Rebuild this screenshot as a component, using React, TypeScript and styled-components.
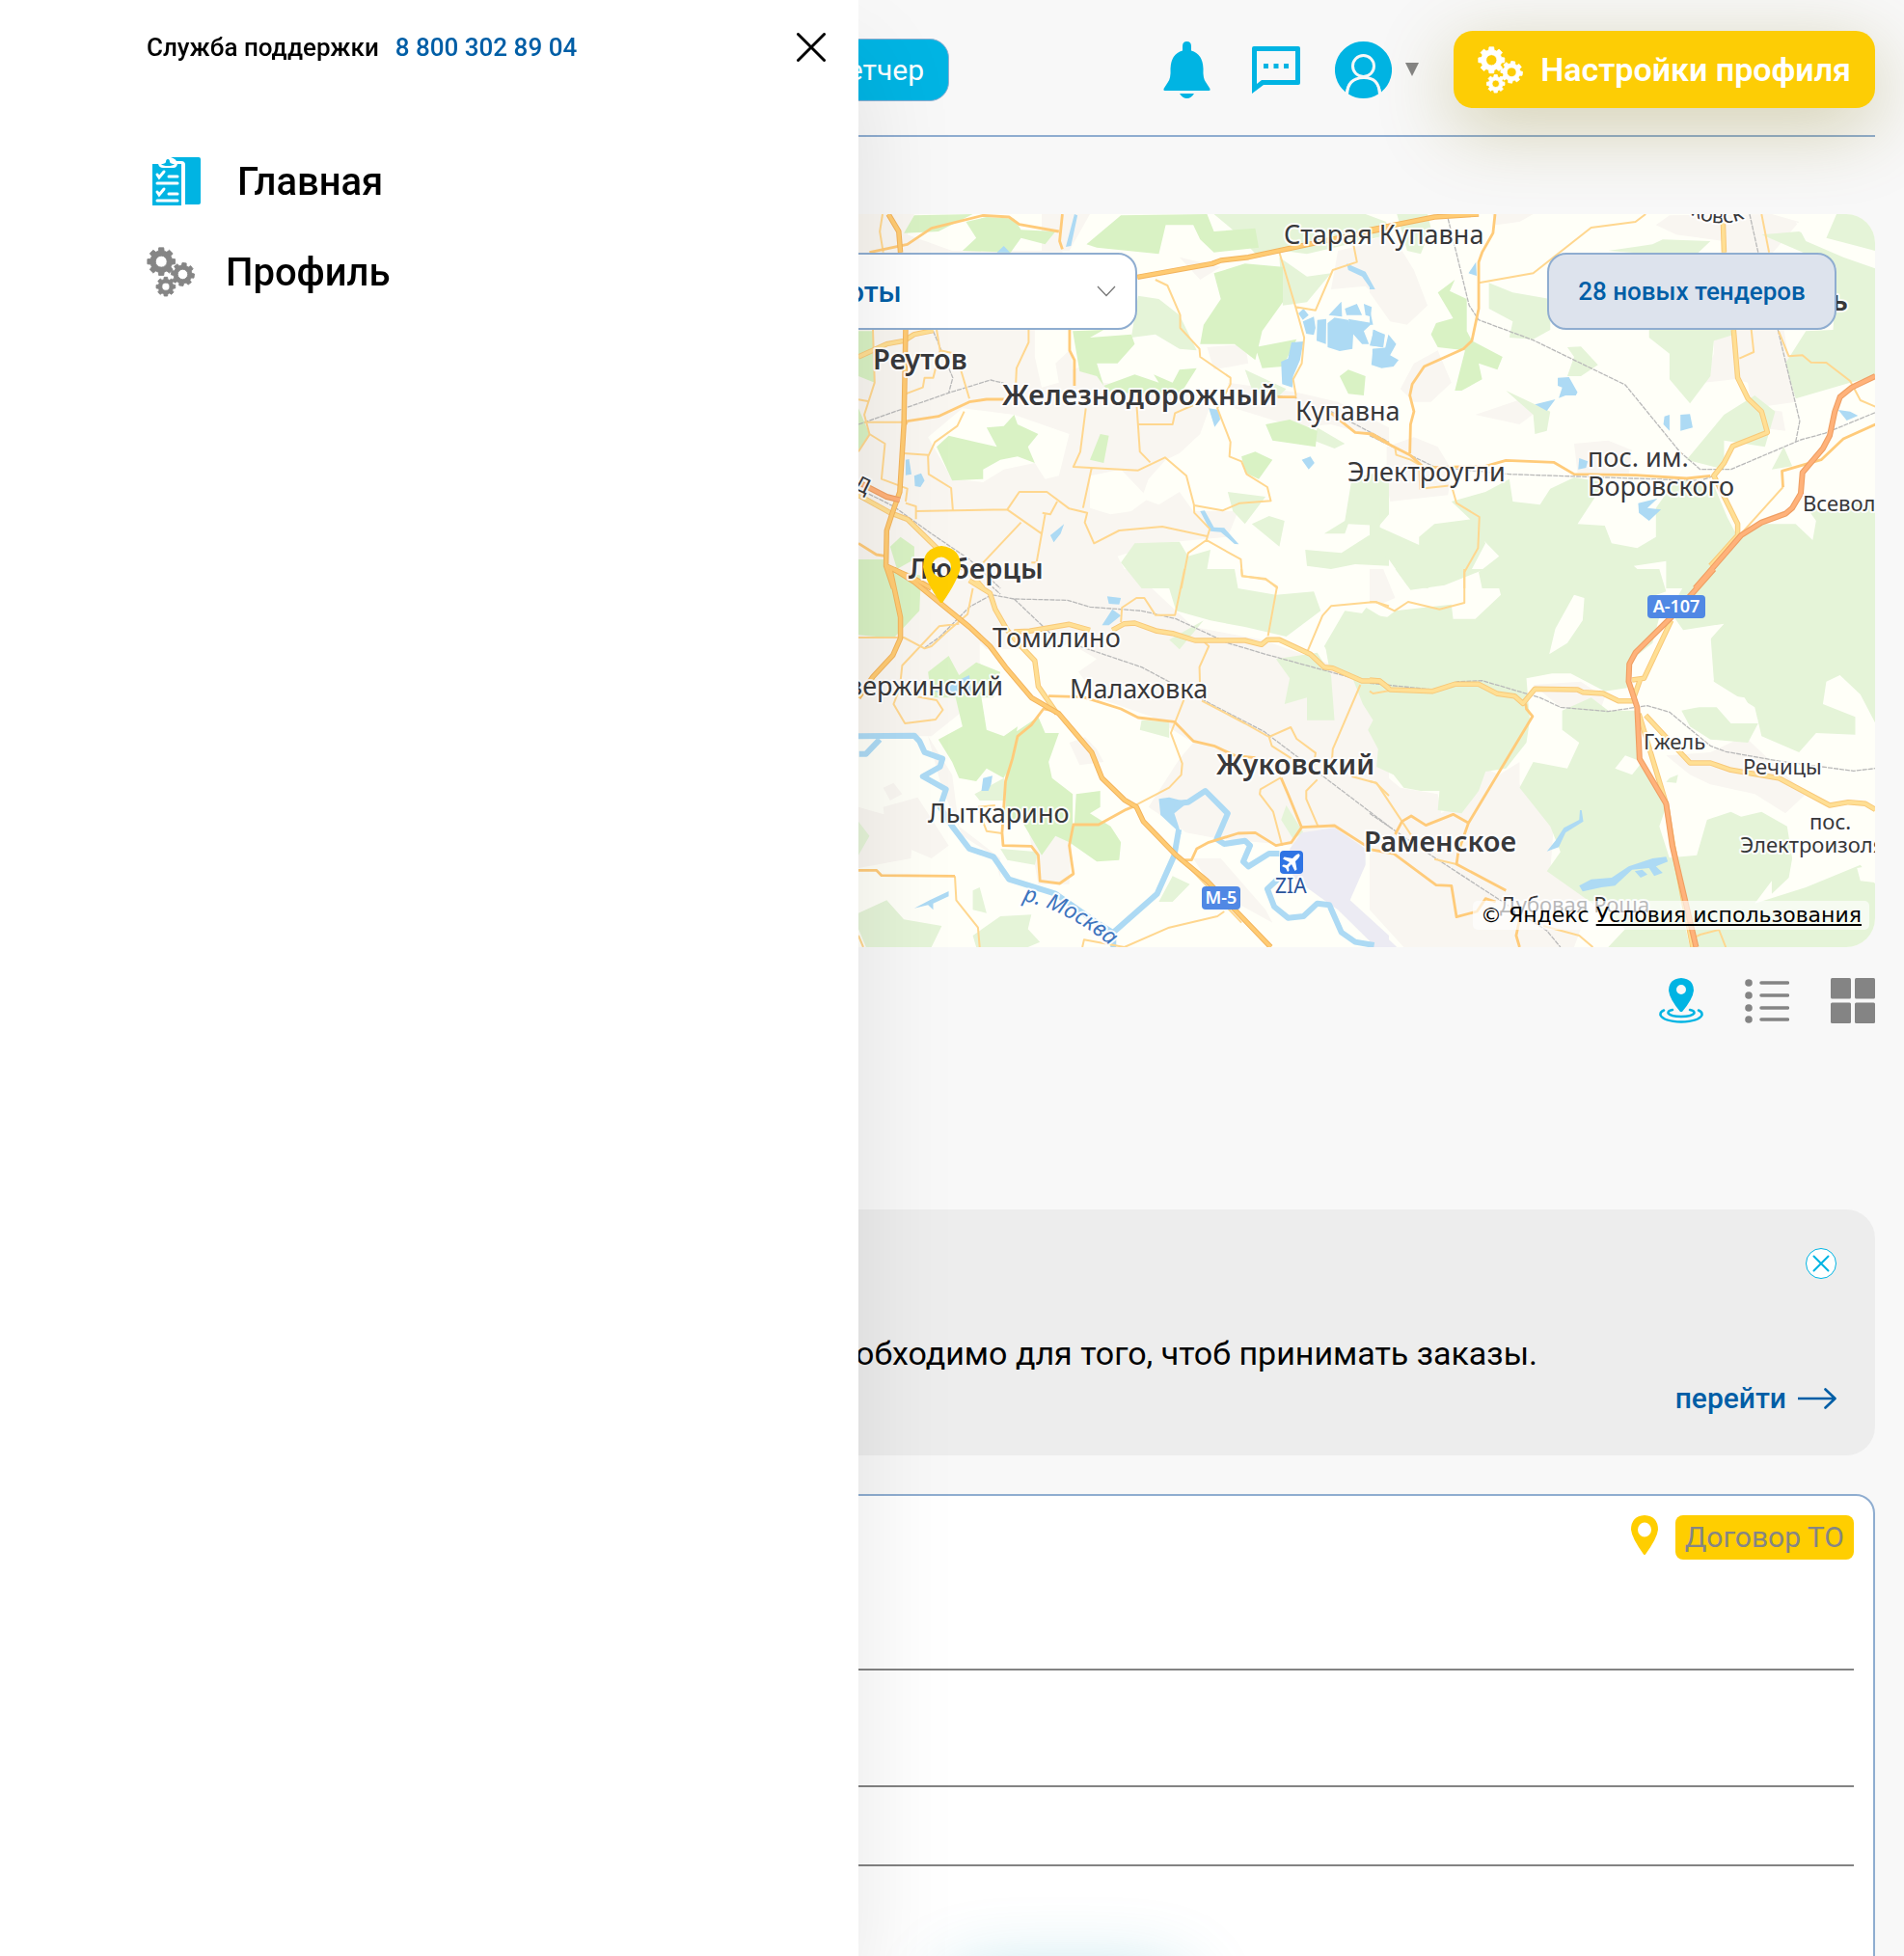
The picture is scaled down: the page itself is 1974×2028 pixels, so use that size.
import React from "react";
import styled, { createGlobalStyle, css } from "styled-components";

const GlobalStyle = createGlobalStyle`
  *, *::before, *::after { box-sizing: border-box; }
  body {
    margin: 0;
    background: #f8f8f8;
    color: #000;
    font-family: Roboto, "Noto Sans", sans-serif;
  }
  button, select { font: inherit; color: inherit; }
  button { padding: 0; border: 0; background: none; cursor: pointer; }
  a { color: inherit; text-decoration: none; }
  svg { display: block; flex: none; }
`;

/* ---------- icons ---------- */

function gear(cx: number, cy: number, outer: number, hole: number, turn = 0) {
  const inner = outer * 0.78;
  const point = (r: number, deg: number) => {
    const a = ((deg + turn) * Math.PI) / 180;
    return `${(cx + r * Math.cos(a)).toFixed(2)},${(cy + r * Math.sin(a)).toFixed(2)}`;
  };
  const points: string[] = [];
  for (let i = 0; i < 8; i++) {
    const a = i * 45;
    points.push(point(inner, a - 15), point(outer, a - 10), point(outer, a + 10), point(inner, a + 15));
  }
  return (
    `M${points.join("L")}Z` +
    `M${cx - hole},${cy}a${hole},${hole} 0 1 0 ${hole * 2},0a${hole},${hole} 0 1 0 ${-hole * 2},0Z`
  );
}

const GearsIcon = ({ width, height }: { width: number; height: number }) => (
  <svg width={width} height={height} viewBox="0 0 47 49" preserveAspectRatio="none" aria-hidden="true">
    <path
      fill="currentColor"
      stroke="currentColor"
      strokeWidth="0.8"
      strokeLinejoin="round"
      fillRule="evenodd"
      d={gear(14.3, 14.3, 13.7, 5.6) + gear(35.2, 26.8, 11.4, 4.9, 8) + gear(18.7, 38.8, 9.4, 3.8)}
    />
  </svg>
);

const ClipboardIcon = () => (
  <svg width="50" height="50" viewBox="0 0 50 50" aria-hidden="true">
    <path fill="#00b4e3" d="M19 0H48q2 0 2 2V47q0 2-2 2H34V8q0-4-4-4H25q-2-3-6-4Z" />
    <path fill="#00b4e3" d="M0 7H6Q7 11 11 11H22Q25 11 26 7H30V50H0Z" />
    <path fill="#00b4e3" d="M9 7q4 0 5-2 0-3 2-3t2 3q1 2 5 2-2 2-7 2T9 7Z" />
    <g stroke="#fff" strokeLinecap="round" strokeWidth="3" fill="none">
      <path d="M17 20h9M5 27h21M17 38h9M5 45h21" />
      <path d="M5 18l2 3 5-6M5 36l2 3 5-6" />
    </g>
  </svg>
);

const CrossIcon = ({ size, width }: { size: number; width: number }) => (
  <svg width={size} height={size} viewBox={`0 0 ${size} ${size}`} aria-hidden="true">
    <path
      d={`M1.5 1.5L${size - 1.5} ${size - 1.5}M${size - 1.5} 1.5L1.5 ${size - 1.5}`}
      stroke="currentColor"
      strokeWidth={width}
      strokeLinecap="round"
    />
  </svg>
);

const BellIcon = () => (
  <svg width="56" height="59" viewBox="0 0 56 59" aria-hidden="true">
    <path
      fill="currentColor"
      d="M24.500 0Q29 0 29 5V9.500Q41 13 41.500 28 41 38 44 42L48.500 49Q49 51 47.500 51H1.500Q0 51 .5 49L5 42Q8 38 7.500 28 8 13 20 9.500V5Q20 0 24.500 0Z"
    />
    <path fill="currentColor" d="M17 54H32Q29 59 24.500 59T17 54Z" />
  </svg>
);

const ChatIcon = () => (
  <svg width="50" height="49" viewBox="0 0 50 49" aria-hidden="true">
    <path
      fill="currentColor"
      fillRule="evenodd"
      d="M2 0H48q2 0 2 2V38q0 2-2 2H12L0 49V2Q0 0 2 0ZM5 5V39L10 35H45V5Z"
    />
    <path fill="currentColor" d="M12 18h5v5h-5zM22.500 18h5v5h-5zM33 18h5v5h-5z" />
  </svg>
);

const UserIcon = () => (
  <svg width="59" height="59" viewBox="0 0 59 59" aria-hidden="true">
    <path
      fill="currentColor"
      d="M29.500 0A29.500 29.500 0 0 1 48 52.500Q46 38 29.500 38T11 52.500A29.500 29.500 0 0 1 29.500 0Z"
    />
    <path fill="currentColor" d="M14 54.500Q14 38 29.500 38T45 54.500Q38 59 29.500 59T14 54.500Z" />
    <path d="M12.500 55Q13 38 29.500 37.500T46.500 55" fill="none" stroke="#f8f8f8" strokeWidth="3" />
    <circle cx="29.500" cy="25.500" r="11" fill="none" stroke="#f8f8f8" strokeWidth="3" />
  </svg>
);

const PinIcon = ({ width, height }: { width: number; height: number }) => (
  <svg width={width} height={height} viewBox="0 0 28 41" preserveAspectRatio="none" aria-hidden="true">
    <path
      fill="#ffce00"
      fillRule="evenodd"
      d="M14 0Q28 1 28 15 27 24 15 40.500 14 41.500 13 40.500 1 24 0 15 0 1 14 0ZM7 15a7 7.500 0 1 0 14 0a7 7.500 0 1 0 -14 0Z"
    />
  </svg>
);

const MapViewIcon = () => (
  <svg width="46" height="47" viewBox="0 0 46 47" aria-hidden="true">
    <path
      fill="currentColor"
      fillRule="evenodd"
      d="M23 0Q36 1 36 13 35 22 24 35H22Q11 22 10 13 10 1 23 0ZM18 12a5 5 0 1 0 10 0a5 5 0 1 0 -10 0Z"
    />
    <g fill="none" stroke="currentColor" strokeWidth="2.500" strokeLinecap="round">
      <path d="M14 33Q9 34 9.500 36.500 12 40 23 40T36.500 36.500Q37 34 32 33" />
      <path d="M5 33.500Q1 35 1.500 38.500 5 45 23 45.500 41 45 44.500 38.500 45 35 41 33.500" />
    </g>
  </svg>
);

const ListViewIcon = () => (
  <svg width="46" height="47" viewBox="0 0 46 47" aria-hidden="true">
    {[5, 18, 31, 43].map((y) => (
      <g key={y}>
        <circle cx="4" cy={y} r="3.800" fill="currentColor" />
        <path d={`M17 ${y}H44.500`} stroke="currentColor" strokeWidth="3.500" strokeLinecap="round" />
      </g>
    ))}
  </svg>
);

const GridViewIcon = () => (
  <svg width="46" height="47" viewBox="0 0 46 47" fill="currentColor" aria-hidden="true">
    <rect width="21" height="21.500" rx="1.500" />
    <rect x="25" width="21" height="21.500" rx="1.500" />
    <rect y="25.500" width="21" height="21.500" rx="1.500" />
    <rect x="25" y="25.500" width="21" height="21.500" rx="1.500" />
  </svg>
);

const ArrowIcon = () => (
  <svg width="40" height="22" viewBox="0 0 40 22" aria-hidden="true">
    <path
      d="M0 11H38M28.500 1.500L38.500 11L28.500 20.500"
      fill="none"
      stroke="currentColor"
      strokeWidth="2.600"
      strokeLinecap="round"
      strokeLinejoin="round"
    />
  </svg>
);

const ChevronIcon = () => (
  <svg width="20" height="12" viewBox="0 0 20 12" aria-hidden="true">
    <path d="M1 1L10 10.500L19 1" fill="none" stroke="#777" strokeWidth="1.300" />
  </svg>
);

/* ---------- map ---------- */

type Layer =
  | "urban" | "clearing" | "wood" | "glade" | "park" | "field" | "water" | "river"
  | "rail" | "minor" | "mid" | "thick" | "highway" | "trunk";

const layerOrder: Layer[] = [
  "urban", "clearing", "wood", "glade", "park", "field", "water", "river",
  "rail", "minor", "mid", "thick", "highway", "trunk",
];

const fills: Partial<Record<Layer, string>> = {
  urban: "#f9f6f1",
  clearing: "#fffff8",
  wood: "#e5f4d8",
  glade: "#fffff8",
  park: "#d9f2c4",
  field: "#ecebf3",
  water: "#addaf4",
};

const strokes: Partial<Record<Layer, Array<[string, number]>>> = {
  river: [["#addaf4", 6]],
  rail: [["#b9b9b9", 1.3]],
  minor: [["#ffd78f", 2]],
  mid: [["#ffcb7a", 2.8]],
  thick: [["#f8c878", 5.5], ["#ffdf94", 3.6]],
  highway: [["#f2b35c", 5.5], ["#ffcb73", 3.6]],
  trunk: [["#ef9f63", 6], ["#ffb27a", 3.8]],
};

interface Sheet {
  origin: string;
  layers: Partial<Record<Layer, string>>;
}

const sheets: Sheet[] = [
  {
    origin: "translate(880 210) scale(0.35714 0.33333)",
    layers: {
      urban:
        "M28,36L190,36 170,100 300,150 620,150 640,400 650,520 700,500 740,560 1060,600 1020,720 960,780 920,800 870,860 850,920 900,940 960,900 1000,960 1130,960 1100,1040 900,1060 780,1100 830,1200 28,1200Z" +
        "M560,36L700,36 640,150 560,150ZM960,170L1080,200 1020,240Z" +
        "M1040,450L1150,440 1160,500 1060,520ZM1420,150L1500,130 1568,160 1568,330 1500,260 1400,270ZM1100,560L1300,590 1420,620 1568,700 1568,740 1400,690 1300,700 1120,640Z",
      clearing:
        "M540,396L640,396 640,460 600,500 610,560 560,575 540,480ZM230,730L330,640 480,660 640,720 610,850 570,860 540,810 450,830 390,870 300,860ZM700,850L790,830 870,920 820,960 760,970 700,950Z",
      wood:
        "M1060,36L1500,36 1560,60 1568,100 1330,160 1260,150 1190,170 1120,90ZM840,290L900,300 960,350 1010,460 960,455 890,410 820,420Z" +
        "M1250,170L1330,230 1400,220 1330,310 1260,320ZM1150,520L1270,580 1230,620 1170,580ZM1100,900L1210,915 1150,1000 1115,960Z" +
        "M1170,1000L1220,975 1265,990 1250,1070ZM1460,860L1568,830 1568,970 1540,1005 1450,1000 1440,1030 1380,1030 1440,990ZM1325,1080L1430,1090 1510,1035 1568,1060 1568,1130 1470,1125 1400,1140 1330,1130Z" +
        "M790,1120L830,1060 960,1055 985,1100 1050,1080 1030,1200 850,1200ZM1360,700L1440,750 1410,765 1350,740Z",
      park:
        "M160,95L190,40 360,36 260,90ZM340,60L400,45 480,50 500,85 600,90 570,130 500,110 470,155 330,150 370,110Z" +
        "M690,130L790,40 1040,36 1060,90 1180,80 1190,140 1060,155 1020,115 1000,70 920,70 900,160 720,140Z" +
        "M1060,220L1150,190 1260,200 1260,310 1200,400 1180,490 1120,440 1020,440 1030,380 1080,300Z" +
        "M650,400L740,396 700,420 820,410 830,440 780,500 720,500 740,570 720,540 670,525Z" +
        "M740,570L830,535 900,560 885,535 940,560 960,520 1010,515 960,600 760,590Z" +
        "M400,700L450,695 480,660 490,690 550,720 520,760 540,810 490,790 440,800 390,830 390,860 300,865 255,760 290,725 430,760Z" +
        "M730,720L755,725 740,810 700,800ZM1140,790L1180,775 1230,800 1190,860 1150,840ZM1210,690L1280,675 1360,710 1355,760 1230,740Z" +
        "M1425,540L1450,520 1500,540 1495,600 1450,595ZM28,400L70,400 75,560 28,540ZM28,640L60,720 28,770Z" +
        "M120,1070L150,1040 190,1070 190,1110 140,1140ZM28,1110L100,1110 130,1200 28,1200ZM1180,450L1300,425 1260,510 1200,515Z",
      water:
        "M655,36L664,40 645,135 630,138ZM430,155L450,135 468,155ZM1445,190L1500,215 1528,270 1515,268 1490,230 1450,210Z" +
        "M1305,345L1320,330 1335,350 1318,365ZM1318,370L1350,355 1355,390 1350,412 1328,408ZM1360,365L1386,362 1385,440 1358,430Z" +
        "M1390,375L1410,358 1450,365 1465,400 1462,455 1425,462 1390,450ZM1393,350L1430,308 1432,355ZM1440,330L1475,315 1490,350 1445,350Z" +
        "M1495,315L1518,325 1515,355 1500,350ZM1450,362L1520,375 1495,400 1510,440 1490,440 1465,410ZM1525,395L1555,415 1550,450 1512,445Z" +
        "M1520,455L1568,450 1568,510 1520,495ZM1285,435L1320,432 1310,490 1290,540 1288,575 1258,565 1255,495 1275,485Z" +
        "M1045,640L1075,645 1078,675 1062,698ZM1315,800L1340,790 1352,810 1335,830ZM165,800L175,798 182,845 165,848Z" +
        "M190,850L210,842 220,865 208,885 192,882ZM585,1035L605,1018 625,1000 615,1030 595,1057ZM1020,960L1033,958 1060,1010 1090,1012 1132,1063 1120,1062 1080,1025 1050,1022Z",
      rail:
        "M28,690L290,592 412,552 450,562M245,400L302,545 290,592M28,890L130,945 240,1030 350,1110 440,1200M1245,602L1300,608M1400,650L1568,745",
      minor:
        "M98,36L90,90 100,155M70,396L75,560 45,660 60,720 105,750 95,860 170,890 165,930M255,396L265,460 310,470M522,396L522,435 487,515 485,560" +
        "M325,520L350,610M165,595L215,575 220,545 245,545 265,460M45,683L160,683M28,775L60,722M28,613L55,618M335,650L315,695 250,745 230,790 232,845 297,888 302,955" +
        "M160,780L230,785M165,935L195,945 195,985M195,960L460,955 495,900 575,900 640,952 692,965 685,995 712,1060 785,1020 910,1008 1040,1038M460,955L560,1030" +
        "M605,930L585,970 562,965M570,970L545,1120 530,1120M500,995L390,1120M688,640L672,775 652,822 840,833 918,793 980,850 1002,940 1003,965 1048,1015 1038,1050 985,1090 965,1200" +
        "M705,825L680,950M836,635L845,775 875,808M838,690L940,690 947,655 1000,630M890,240L925,258 962,350 962,390 1018,455 1020,480 1108,545 1108,565 1070,640 1108,745 1105,790 1140,805 1155,845 1215,885 1225,928 1135,935 1085,958 1003,942" +
        "M1250,155L1297,325 1322,420 1315,500 1290,550 1298,600M1297,325L1355,335 1405,210 1475,185 1465,130M1038,1050L1138,1110 1142,1162 1210,1170 1245,1200",
      mid:
        "M60,155L170,130 240,80 390,40 465,45 495,68 610,90M620,36L612,120 620,145M165,690L170,680 260,665 350,620 400,612 450,612" +
        "M641,396L641,460 655,490 655,570M1245,605L1300,605M1400,655L1470,715 1520,720 1568,750M28,1060L80,1095 108,1100",
      thick: "M28,480L110,440 160,430 190,410 245,398M28,910L120,965 170,985 270,1090 350,1150 390,1200",
      highway:
        "M115,36L145,90 150,155M165,396L160,690 148,900 125,970 110,1020 108,1130 130,1200M108,1130L190,1170 240,1200M838,232L1055,190 1080,180 1160,170 1400,115 1568,78",
      trunk: "M28,870L110,915 148,925",
    },
  },
  {
    origin: "translate(1420 210) scale(0.35332 0.33333)",
    layers: {
      urban:
        "M0,120L60,90 130,210 170,320 110,380 60,370 0,280ZM360,36L480,36 440,60 370,70Z" +
        "M840,70L880,40 1180,36 1260,60 1220,110 1180,160 1250,620 1120,640 1110,560 1070,550 980,560 1010,470 1010,420 1050,396 1040,120 900,100Z" +
        "M90,580L130,500 200,460 240,560 180,620 130,620ZM310,660L450,610 490,650 440,690Z" +
        "M50,760L130,730 200,760 240,830 230,910 60,930 50,870ZM600,750L700,740 770,770 760,850 610,840ZM1150,640L1210,650 1220,710 1140,700Z",
      wood:
        "M80,36L170,36 180,80 150,160 110,150ZM700,150L830,130 860,115 1000,120 950,170ZM350,250L420,280 530,300 530,396 480,425 410,420 420,370 350,330Z" +
        "M820,396L1070,396 1070,410 1010,430 1000,540 940,625 880,550 880,470 820,420ZM1150,100L1260,90 1484,200 1484,540 1410,560 1250,610 1220,500 1280,400 1360,396 1370,200Z" +
        "M1370,36L1484,36 1484,150 1340,110ZM580,450L620,448 670,505 620,540 580,540 600,480ZM400,585L530,650 520,710 485,720 480,660Z" +
        "M1040,660L1130,600 1190,650 1160,760 1040,740 1040,830 930,800ZM1215,760L1180,830 1240,820Z" +
        "M0,950L30,950 30,1010 145,1065 145,1040 190,1000 300,985 340,1060 300,1140 200,1180 170,1200 110,1190 50,1100 0,1125Z" +
        "M240,930L340,900 410,860 420,930 500,940 530,890 600,855 690,870 610,1000 690,1005 710,1060 785,1075 840,1040 840,950 900,860 1010,880 1050,980 1080,1040 1140,1000 1250,1000 1300,1050 1310,990 1290,960 1484,920 1484,1200 870,1200 870,1115 775,1130 850,1200 330,1200 320,1150 380,1100 325,1040 300,990Z",
      glade: "M1250,60L1330,110 1484,170 1484,205 1390,170 1280,120ZM1280,615L1400,620 1420,570 1484,560 1484,640 1280,640Z",
      park:
        "M200,280L250,240 235,275 285,300 285,400 300,430 390,480 375,520 320,500 330,550 270,585 250,585 280,460 200,450 180,410 195,375 245,360Z",
      water:
        "M0,245L15,270 0,270ZM290,220L312,185 314,228ZM0,330L10,380 0,380ZM10,395L45,410 40,450 5,445ZM55,410L78,440 60,475 85,490 70,510 35,515 5,505 10,455 45,455Z" +
        "M552,545L585,543 610,590 605,600 575,600 555,608 565,575 552,570ZM485,628L545,612 520,648ZM865,665L880,660 880,710 862,690ZM912,660L940,658 948,700 912,710Z" +
        "M1375,645L1410,650 1433,663 1400,678ZM615,795L640,805 635,825 612,830ZM788,935L845,920 815,950 855,955 820,990 790,965Z",
      rail:
        "M230,50L292,320 320,365 480,428 750,567 910,775 970,830 1060,830 1265,738 1335,718 1484,653M1115,36L1140,155M1198,396L1262,680 1250,745M0,725L190,822 410,845 970,865 1010,850",
      minor:
        "M320,250L480,220 650,78 780,60 810,36M1150,36L1172,155M1200,400L1230,478 1270,475 1295,497 1340,498 1410,555 1440,615 1484,635" +
        "M1120,396L1127,465 1085,485M75,765L78,785 120,800 145,815 148,890 240,880 255,935 322,978 318,1075 278,1150 278,1200M1213,885L1090,1030",
      mid:
        "M368,36L362,95 330,155 320,185 320,330 300,430 275,455 160,510 125,565 118,600 130,650 120,690 118,780M0,720L75,762 118,785 160,825 340,820 400,802 540,808 600,845 780,848 930,858 1000,850M1484,690L1390,735 1325,800 1210,835 1213,885",
      thick:
        "M1037,60L1040,155M1068,396L1080,545 1110,610 1150,650 1167,715 1065,758 1040,810 1010,850 1080,1000 1080,1035 1000,1130",
      highway: "M0,85L190,45 320,36",
      trunk: "M1484,540L1415,575 1380,605 1365,650 1350,725 1330,765 1270,840 1265,905 1240,950 1220,968 1150,995 1090,1035 955,1200",
    },
  },
  {
    origin: "translate(880 590) scale(0.35714 0.33333)",
    layers: {
      urban:
        "M28,0L860,0 880,60 1000,180 1200,220 1568,360 1568,860 1300,860 1080,840 980,820 870,740 960,590 1000,540 880,460 720,400 620,250 400,250 380,400 240,520 28,520Z" +
        "M640,540L720,510 790,520 740,600 670,610ZM230,520L300,640 320,800 440,900 440,960 420,890 330,830 270,680Z" +
        "M520,800L650,800 640,980 550,980ZM100,740L200,710 290,860 240,900 110,840ZM28,740L190,790 180,900 28,930ZM1000,900L1080,900 1210,1060 1230,1100 1060,1000ZM100,680L130,665 155,700 120,720Z",
      clearing: "M380,230L450,300 540,410 450,500 390,480 420,390 380,290ZM580,260L640,230 720,280 640,340 580,340ZM620,400L740,420 880,480 940,560 900,620 830,720 790,700 720,560 620,450Z",
      wood:
        "M855,0L1120,0 1130,60 1240,80 1350,70 1370,130 1270,210 1150,180 1050,160 950,130 930,60 860,60ZM930,220L1030,160 960,250ZM1380,240L1440,130 1568,150 1568,300 1410,290Z" +
        "M1240,280L1360,260 1400,330 1410,470 1330,470 1330,400 1265,420 1280,340ZM850,470L930,475 930,525 845,500Z" +
        "M365,700L450,650 455,720 380,720ZM440,870L550,880 540,920 460,905ZM28,1070L110,1030 160,1090 270,1110 240,1176 50,1176 28,1120Z" +
        "M360,1000L380,990 400,1070 360,1060ZM360,1140L440,1080 530,1075 520,1120 555,1160 520,1176 370,1176ZM900,1035L940,955 990,980 940,1035ZM28,785L60,830 28,890ZM1255,780L1270,735 1320,820 1290,840Z",
      park:
        "M28,0L120,0 210,20 205,130 130,215 28,205ZM230,320L290,270 320,330 370,290 440,320 420,400 385,400 400,500 450,520 490,490 470,600 450,650 400,620 370,660 320,650 300,600 260,530 330,490 310,400 240,400Z" +
        "M480,510L550,460 570,510 610,510 580,600 590,650 650,700 650,790 640,850 600,830 560,890 500,780 455,780 455,640Z" +
        "M660,700L730,690 730,740 700,760 760,800 790,850 785,905 720,910 640,850 655,790Z",
      field: "M1315,820L1410,805 1500,870 1500,920 1455,1030 1568,1140 1568,1176 1530,1176 1420,1060 1380,1030 1290,960 1280,870Z",
      water:
        "M900,715L930,710 985,725 945,760 965,825 905,765ZM750,85L790,90 785,110 755,108ZM735,175L765,125 790,145 755,175ZM390,650L417,643 413,670 405,690 385,690Z" +
        "M190,1055L235,1030 290,1002 290,1018 245,1040 245,1060 230,1045ZM250,380L300,355 350,330 355,390 260,385Z",
      river:
        "M28,520L190,518 205,535 220,570 272,590 265,615 215,645 282,685 265,740 300,800 350,870 420,895 465,965 600,1010 720,1100 768,1132 768,1176M768,1130L895,1010 945,890 958,810" +
        "M30,575L50,575 90,530M945,730L985,725 1035,690 1100,760 1068,840 1090,855 1150,845 1165,860 1145,910 1160,925 1220,885 1250,885M1250,960L1215,995 1235,1050 1275,1085 1320,1080 1360,1040 1395,1045 1430,1130 1470,1160 1525,1170",
      rail:
        "M220,245L265,210 350,118 415,80 480,93 635,97 700,118 850,130 950,155 1100,230 1210,265 1500,350 1568,362M400,40L440,78M480,93L585,200M670,240L850,305 1025,405 1205,505 1568,800",
      minor:
        "M28,213L160,213 220,247 240,240 280,200 345,140 360,60M320,170L262,178 155,300 148,370 130,420 163,480 252,468 273,438 255,408 190,395M308,955L312,1030 375,1115 380,1176" +
        "M835,733L930,680 965,640 968,605 935,510 975,400M1020,380L1018,305 1045,240 1030,225M790,165L793,120 835,90 858,90 890,143 947,143 975,0M1140,0L1142,22 1210,32 1243,55 1217,208" +
        "M1568,115L1528,102 1400,115 1375,145 1330,260M1485,360L1405,560 1403,590M1025,410L1150,480 1220,522 1283,492 1300,528 1355,572 1350,610M1220,522L1228,550 1330,620" +
        "M1255,648L1195,685 1193,700 1232,755 1258,860M1360,655L1328,690 1328,715 1362,800M1460,645L1530,665 1568,705M800,1176L930,1115 1070,1080 1090,1065M678,1176L683,1153 800,1176 M375,740L425,735M375,745L400,815 445,822M28,1140L42,1176M990,930L1140,1100",
      mid:
        "M580,395L680,398 790,435 840,462 945,475 1000,535 1060,550 1120,580 1180,587M445,820L448,860 530,862 550,890 555,970 612,978 652,948 640,860 652,795 725,795 805,748 835,735" +
        "M590,440L565,435 530,485 490,520 475,590 455,660 445,820M1315,805L1275,700 1255,650M975,905L995,905 1010,870 1045,850 1130,822 1180,820 1240,860 1285,850 1315,803 1410,798 1500,860M28,937L80,937 95,953 308,955",
      thick:
        "M350,35L410,75 425,125 460,190 500,240 540,285 550,365 605,450M480,195L525,193 640,172 700,190M765,190L800,170 830,168 895,193 940,200 1005,222 1150,222 1198,235 1215,220 1250,220 1340,265 1380,305 1405,308 1490,348 1540,348 1568,370",
      highway:
        "M120,0L150,150 150,215 128,268 70,335 28,400M130,0L190,40 350,180 410,240 455,305 530,400 610,450 705,570 735,650 800,718 835,740 855,785 950,890 1040,970 1225,1176",
    },
  },
  {
    origin: "translate(1420 590) scale(0.35332 0.33333)",
    layers: {
      urban:
        "M0,0L40,0 75,90 30,110 0,100ZM300,600L380,640 440,600 440,670 490,740 540,800 530,940 600,960 640,1030 640,1060 600,1176 100,1176 0,1060 0,600 90,680 200,700 210,760 320,690Z" +
        "M480,360L620,350 690,400 680,430 560,430ZM870,580L1000,570 1100,520 1140,560 1280,700 1220,760 1130,700 1000,670 940,640Z",
      wood:
        "M-10,120L45,155 75,130 240,110 245,155 310,155 385,80 375,40 340,0 850,0 870,70 830,85 850,150 830,230 760,290 755,370 690,380 590,325 535,325 460,340 470,470 460,540 400,620 340,630 320,690 270,760 200,750 205,690 150,690 100,680 70,640 20,615 25,560 -5,500 10,470 -20,420 -50,340 -120,300 -130,240 -60,190Z" +
        "M75,0L340,0 220,50 120,65ZM950,0L1484,0 1484,480 1440,390 1380,330 1340,350 1330,420 1425,460 1425,515 1310,510 1260,570 1150,520 1130,430 1010,350 990,230 1040,170 920,190 880,130Z" +
        "M915,440L1010,420 1060,480 1140,480 1110,540 1000,530 940,490ZM880,650L905,640 900,665 870,662Z" +
        "M565,440L650,400 700,440 780,440 790,600 870,740 850,800 880,900 940,1176 700,1176 750,1120 640,1030 520,940 560,880 530,800 440,680 480,600 580,620 615,540 565,500Z" +
        "M860,900L960,890 990,780 1060,755 1090,770 1150,755 1225,800 1240,900 1230,960 1180,1010 1180,970 1130,1040 1280,990 1440,920 1484,980 1484,1176 1000,1176 960,1176Z",
      glade:
        "M600,80L630,90 625,160 580,230 527,265 545,185ZM720,620L750,580 800,600 770,640ZM1010,345L980,380 1100,400 1140,470 1020,430 910,430 860,380 870,200 1000,200ZM1430,930L1484,920 1484,975 1440,970Z",
      field: "M0,1095L80,1176 0,1176Z",
      water:
        "M617,750L622,750 627,785 575,820 555,865 520,878 545,845 570,805 615,780ZM615,985L650,965 710,960 760,925 830,900 870,895 875,910 840,925 860,945 835,955 820,930 770,935 720,985 680,990 625,1003ZM778,940L800,935 815,950 795,960Z",
      rail:
        "M0,355L185,375 260,350 330,347 500,400 560,430 700,443 815,425 880,445 1000,550 1045,568 1200,597 1420,628 1484,620M0,760L180,890 390,1035 520,1125 560,1176",
      minor:
        "M278,0L278,105 205,125 113,102 73,130 18,102 0,103M0,380L10,387 60,378M0,660L20,665 125,833M190,902L255,918M510,1110L615,1140 655,1176M945,1150L970,1137 1025,1122 1045,1176",
      mid:
        "M458,418L460,435 478,458 290,790 260,880 255,918 400,1000M75,825L95,785 122,768 165,797 245,763 290,790M0,872L70,885 195,983 240,985 255,1082 315,1065 340,1025 370,1035M440,1090L430,1140 440,1176",
      thick:
        "M0,345L30,348 60,375 185,380 250,358 320,358 375,388 425,395 450,418 485,373 610,375 625,383 685,387 730,410 775,410M885,160L805,340 770,345M795,340L775,400M790,450L830,590 870,730 890,860 948,1176M810,455L940,603 1000,603 1060,625 1200,650 1350,735 1405,725 1455,730 1484,748",
      trunk: "M1010,0L885,150 780,260 762,295 760,350 785,430 792,590 870,730 888,860 958,1176",
    },
  },
];

interface Label {
  text: string;
  x: number;
  y: number;
  size?: number;
  bold?: boolean;
  end?: boolean;
}

const labels: Label[] = [
  { text: "Старая Купавна", x: 1331, y: 253 },
  { text: "Реутов", x: 905, y: 383, bold: true },
  { text: "Железнодорожный", x: 1039, y: 420, bold: true },
  { text: "Купавна", x: 1343, y: 436 },
  { text: "Электроугли", x: 1397, y: 499 },
  { text: "пос. им.", x: 1646, y: 484 },
  { text: "Воровского", x: 1646, y: 514 },
  { text: "Всеволодово", x: 1869, y: 530, size: 22 },
  { text: "Люберцы", x: 942, y: 600, bold: true },
  { text: "Томилино", x: 1029, y: 671 },
  { text: "Дзержинский", x: 1040, y: 721, end: true },
  { text: "Малаховка", x: 1109, y: 724 },
  { text: "Жуковский", x: 1261, y: 803, bold: true },
  { text: "Лыткарино", x: 962, y: 853 },
  { text: "Раменское", x: 1414, y: 883, bold: true },
  { text: "Гжель", x: 1704, y: 777, size: 22 },
  { text: "Речицы", x: 1807, y: 803, size: 22 },
  { text: "пос.", x: 1876, y: 860, size: 22 },
  { text: "Электроизолятор", x: 1804, y: 884, size: 22 },
  { text: "Дубовая Роща", x: 1555, y: 946, size: 22 },
  { text: "Электросталь", x: 1916, y: 322, bold: true, end: true },
];

const MapLabel = styled.text<{ $size: number; $bold?: boolean; $end?: boolean; $color?: string }>`
  font-family: "Noto Sans", "Open Sans", sans-serif;
  font-size: ${(p) => p.$size}px;
  font-weight: ${(p) => (p.$bold ? 600 : 400)};
  text-anchor: ${(p) => (p.$end ? "end" : "start")};
  fill: ${(p) => p.$color ?? "#38383a"};
  stroke: rgba(255, 255, 255, 0.9);
  stroke-width: 4px;
  stroke-linejoin: round;
  paint-order: stroke;
`;

const RoadNumber = styled.text`
  font-family: "Noto Sans", sans-serif;
  font-size: 18px;
  font-weight: 600;
  text-anchor: middle;
  fill: #fff;
`;

const MapCanvas = styled.svg`
  position: absolute;
  inset: 0;
  width: 100%;
  height: 100%;
`;

const RegionMap = () => (
  <MapCanvas viewBox="266 222 1678 760" preserveAspectRatio="xMaxYMid slice" role="img" aria-label="Карта">
    {layerOrder.map((layer) => (
      <g key={layer}>
        {(strokes[layer] ?? [[fills[layer] as string, 0] as [string, number]]).map(([color, width], pass) => (
          <g key={pass}>
            {sheets.map((sheet) =>
              sheet.layers[layer] ? (
                <g key={sheet.origin} transform={sheet.origin}>
                  <path
                    d={sheet.layers[layer]}
                    fill={width ? "none" : color}
                    stroke={width ? color : "none"}
                    strokeWidth={width}
                    strokeLinejoin="round"
                    strokeDasharray={layer === "rail" ? "5 1" : undefined}
                    vectorEffect="non-scaling-stroke"
                  />
                </g>
              ) : null,
            )}
          </g>
        ))}
      </g>
    ))}

    {labels.map((label) => (
      <MapLabel
        key={label.text}
        x={label.x}
        y={label.y}
        $size={label.size ?? (label.bold ? 29 : 27)}
        $bold={label.bold}
        $end={label.end}
      >
        {label.text}
      </MapLabel>
    ))}

    <path id="moscow-river" d="M1060,934Q1110,944 1162,990" fill="none" />
    <MapLabel $size={23} $color="#3d74bd" fontStyle="italic">
      <textPath href="#moscow-river">р. Москва</textPath>
    </MapLabel>
    <path id="north-road" d="M1752,222Q1784,242 1822,220" fill="none" />
    <MapLabel $size={22}>
      <textPath href="#north-road">ковск</textPath>
    </MapLabel>
    <path id="ring-road" d="M832,481L898,513" fill="none" />
    <MapLabel $size={22} $end>
      <textPath href="#ring-road" startOffset="100%">МКАД</textPath>
    </MapLabel>

    <rect x="1246" y="919" width="40" height="24" rx="4" fill="#5088e4" />
    <RoadNumber x="1266" y="937">М-5</RoadNumber>
    <rect x="1708" y="617" width="60" height="24" rx="4" fill="#5088e4" />
    <RoadNumber x="1738" y="635">А-107</RoadNumber>

    <rect x="1327" y="882" width="24" height="24" rx="4" fill="#2f74e4" />
    <path
      fill="#fff"
      d="M1347,885.500q1.500,1.500 -1,4.500l-3,3 1.500,8.500 -2,1.500 -3.500,-7 -3,3 .5,3.500 -1.500,1.500 -2,-4 -4,-2 1.500,-1.500 3.500,.5 3,-3 -7,-3.500 1.500,-2 8.500,1.500 3,-3q3,-2.500 4,-1.500Z"
    />
    <MapLabel x="1322" y="926" $size={21} $color="#2b549b">ZIA</MapLabel>

    <path
      fill="#ffce00"
      fillRule="evenodd"
      d="M976,566Q996,568 996,588 993,602 977,625H975Q959,602 957,588 957,568 976,566ZM966,588a10,10.500 0 1 0 20,0a10,10.500 0 1 0 -20,0Z"
    />
  </MapCanvas>
);

/* ---------- page ---------- */

const cyan = "#00b4e3";
const blue = "#005ea6";
const line = "#8fadd0";

const Page = styled.div`
  height: 100vh;
  overflow: hidden;
  padding: 0 30px 0 266px;
`;

const Header = styled.header`
  display: flex;
  align-items: center;
  height: 142px;
  padding-top: 4px;
  border-bottom: 2px solid ${line};
`;

const RoleSwitch = styled.div`
  display: flex;
  justify-content: flex-end;
  width: 718px;
`;

const RoleButton = styled.button`
  height: 65px;
  padding: 0 25px;
  border: 1px solid ${line};
  border-radius: 20px;
  background: ${cyan};
  color: #fff;
  font-size: 30px;
`;

const HeaderActions = styled.div`
  display: flex;
  align-items: center;
  gap: 36px;
  margin-left: auto;
  color: ${cyan};
`;

const IconButton = styled.button`
  display: flex;
  align-items: center;
  gap: 14px;
`;

const Caret = styled.span`
  border: 7px solid transparent;
  border-top: 14px solid #858585;
  border-bottom: 0;
`;

const SettingsButton = styled.button`
  display: flex;
  align-items: center;
  gap: 18px;
  height: 80px;
  padding: 0 25px;
  border-radius: 20px;
  background: #fdcd05;
  box-shadow: 0 20px 80px rgba(122, 110, 0, 0.3);
  color: #fff;
  font-size: 34px;
  font-weight: 600;
`;

const MapPanel = styled.section`
  position: relative;
  height: 760px;
  margin-top: 80px;
  padding: 40px;
  overflow: hidden;
  border-radius: 30px;
  background: #fffff8;
`;

const MapTools = styled.div`
  position: relative;
  display: flex;
  justify-content: space-between;
  padding-left: 491px;
`;

const toolBox = css`
  height: 80px;
  border: 2px solid ${line};
  border-radius: 20px;
  color: ${blue};
  font-weight: 500;
`;

const WorkFilter = styled.label`
  position: relative;
  display: flex;
  align-items: center;
  width: 382px;

  svg {
    position: absolute;
    right: 22px;
  }
`;

const WorkSelect = styled.select`
  ${toolBox}
  width: 100%;
  padding: 0 28px;
  appearance: none;
  background: #fff;
  font-size: 30px;
`;

const TendersButton = styled.button`
  ${toolBox}
  width: 300px;
  background: #dde3ed;
  font-size: 26px;
`;

const MapCopyright = styled.p`
  position: absolute;
  right: 6px;
  bottom: 18px;
  margin: 0;
  padding: 0 8px;
  border-radius: 5px;
  background: rgba(255, 255, 255, 0.65);
  font: 22px/30px "DejaVu Sans", sans-serif;

  a { text-decoration: underline; }
`;

const ViewSwitch = styled.div`
  display: flex;
  justify-content: flex-end;
  gap: 43px;
  padding: 32px 0;
`;

const ViewButton = styled.button<{ $active?: boolean }>`
  color: ${(p) => (p.$active ? cyan : "#848484")};
`;

const Notice = styled.section`
  display: flex;
  flex-direction: column;
  height: 255px;
  margin-top: 161px;
  padding: 40px;
  border-radius: 30px;
  background: #ededed;
`;

const NoticeClose = styled.button`
  display: flex;
  align-items: center;
  justify-content: center;
  align-self: flex-end;
  width: 32px;
  height: 32px;
  border: 1px solid ${cyan};
  border-radius: 50%;
  background: #fff;
  color: ${cyan};
`;

const NoticeText = styled.p`
  margin: 55px 0 0;
  padding-right: 310px;
  font-size: 34px;
  line-height: 44px;
  text-align: right;
`;

const NoticeLink = styled.a`
  display: flex;
  align-items: center;
  align-self: flex-end;
  gap: 12px;
  margin-top: 7px;
  color: ${blue};
  font-size: 30px;
  font-weight: 500;
  line-height: 36px;
`;

const OrderCard = styled.article`
  height: 700px;
  margin-top: 40px;
  padding: 20px;
  border: 2px solid ${line};
  border-radius: 20px;
  background: #fff;
`;

const OrderRow = styled.div<{ $height: number }>`
  display: flex;
  justify-content: flex-end;
  gap: 18px;
  height: ${(p) => p.$height}px;
  border-bottom: 2px solid #838383;
`;

const OrderTag = styled.span`
  height: 46px;
  padding: 0 10px;
  border-radius: 8px;
  background: #ffce00;
  color: #858585;
  font-size: 30px;
  line-height: 46px;
`;

const OrderAction = styled.div`
  width: 240px;
  height: 80px;
  margin: 115px auto 0;
  border-radius: 20px;
  background: ${cyan};
  box-shadow: 0 0 80px rgba(0, 150, 180, 0.32);
`;

const Drawer = styled.aside`
  position: fixed;
  inset: 0 auto 0 0;
  width: 890px;
  padding: 30px 34px 0 152px;
  background: #fff;
  box-shadow: 0 60px 100px rgba(0, 0, 0, 0.1);
`;

const DrawerTop = styled.div`
  display: flex;
  align-items: center;
  gap: 17px;
  height: 37px;
  font-size: 26px;
  font-weight: 500;
  line-height: 38px;

  a { color: ${blue}; }
  button { margin-left: auto; }
`;

const Menu = styled.nav`
  display: flex;
  flex-direction: column;
  gap: 42px;
  margin-top: 95px;
`;

const MenuLink = styled.a<{ $indent?: boolean }>`
  display: flex;
  align-items: center;
  gap: ${(p) => (p.$indent ? 38 : 32)}px;
  height: 52px;
  padding-left: ${(p) => (p.$indent ? 6 : 0)}px;
  font-size: 40px;
  font-weight: 500;

  svg { color: #858585; }
`;

export default function App() {
  return (
    <>
      <GlobalStyle />
      <Page>
        <Header>
          <RoleSwitch>
            <RoleButton type="button">Диспетчер</RoleButton>
          </RoleSwitch>
          <HeaderActions>
            <IconButton type="button" aria-label="Уведомления"><BellIcon /></IconButton>
            <IconButton type="button" aria-label="Сообщения"><ChatIcon /></IconButton>
            <IconButton type="button" aria-label="Аккаунт">
              <UserIcon />
              <Caret />
            </IconButton>
            <SettingsButton type="button">
              <GearsIcon width={47} height={49} />
              Настройки профиля
            </SettingsButton>
          </HeaderActions>
        </Header>

        <main>
          <MapPanel>
            <RegionMap />
            <MapTools>
              <WorkFilter>
                <WorkSelect aria-label="Работы" defaultValue="works">
                  <option value="works">Работы</option>
                </WorkSelect>
                <ChevronIcon />
              </WorkFilter>
              <TendersButton type="button">28 новых тендеров</TendersButton>
            </MapTools>
            <MapCopyright>
              © Яндекс <a href="#terms">Условия использования</a>
            </MapCopyright>
          </MapPanel>

          <ViewSwitch>
            <ViewButton type="button" $active aria-label="На карте"><MapViewIcon /></ViewButton>
            <ViewButton type="button" aria-label="Списком"><ListViewIcon /></ViewButton>
            <ViewButton type="button" aria-label="Плиткой"><GridViewIcon /></ViewButton>
          </ViewSwitch>

          <Notice>
            <NoticeClose type="button" aria-label="Закрыть уведомление">
              <CrossIcon size={18} width={2} />
            </NoticeClose>
            <NoticeText>Необходимо для того, чтоб принимать заказы.</NoticeText>
            <NoticeLink href="#profile">
              перейти
              <ArrowIcon />
            </NoticeLink>
          </Notice>

          <OrderCard>
            <OrderRow $height={161}>
              <PinIcon width={28} height={41} />
              <OrderTag>Договор ТО</OrderTag>
            </OrderRow>
            <OrderRow $height={121} />
            <OrderRow $height={82} />
            <OrderAction />
          </OrderCard>
        </main>
      </Page>

      <Drawer>
        <DrawerTop>
          <span>Служба поддержки</span>
          <a href="tel:88003028904">8 800 302 89 04</a>
          <button type="button" aria-label="Закрыть меню">
            <CrossIcon size={30} width={3} />
          </button>
        </DrawerTop>
        <Menu>
          <MenuLink href="#home" $indent>
            <ClipboardIcon />
            Главная
          </MenuLink>
          <MenuLink href="#profile">
            <GearsIcon width={50} height={52} />
            Профиль
          </MenuLink>
        </Menu>
      </Drawer>
    </>
  );
}
